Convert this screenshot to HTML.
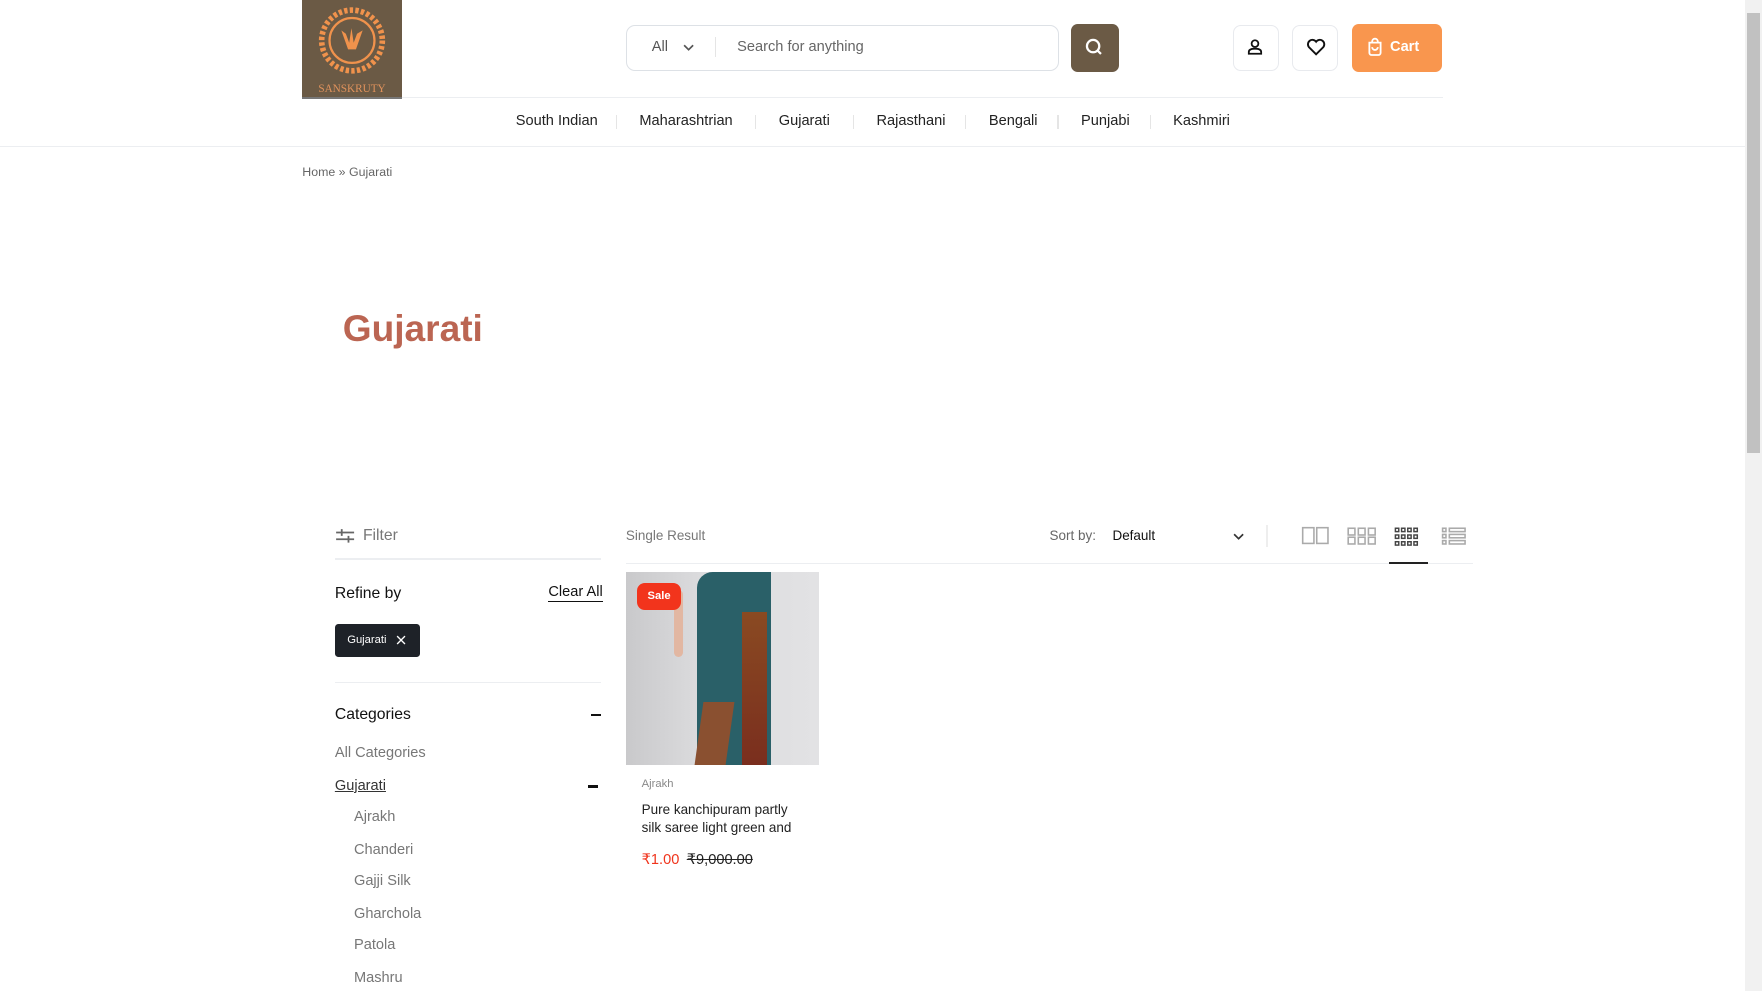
<!DOCTYPE html>
<html><head><meta charset="utf-8"><style>
html,body{margin:0;padding:0;background:#fff;overflow:hidden}
#w{zoom:1.12372;width:1568px;height:882px;position:relative;font-family:"Liberation Sans",sans-serif;color:#1c1c1c}
.a{position:absolute}
.sb{right:0;top:0;width:15px;height:882px;background:#f1f1f1}
.nav span{position:absolute;top:101px;font-size:13px;color:#222}
.sep{position:absolute;top:102px;width:1px;height:13px;background:#e5e5e5}
.cat{position:absolute;font-size:13px;color:#777}
.ib{position:absolute;top:22px;width:41px;height:41px;border:1.5px solid #e8eaee;border-radius:7px;box-sizing:border-box}
</style></head><body><div id="w">
<div class="a" style="left:269px;top:0;width:89px;height:86px;background:#6b5a45"></div>
<svg class="a" style="left:269px;top:0" width="89" height="86" viewBox="0 0 89 86">
<circle cx="44.5" cy="36" r="27" fill="none" stroke="#f0924c" stroke-width="5" stroke-dasharray="3 2"/>
<circle cx="44.5" cy="36" r="20" fill="none" stroke="#f0924c" stroke-width="2"/>
<path d="M35 27 L41 44 L48 44 L54 27 L49 30 L46 38 L44 25 L42 38 L39 30Z" fill="#f0924c"/>
<text x="44.5" y="82" font-family="Liberation Serif,serif" font-size="10" fill="#e0925c" text-anchor="middle">SANSKRUTY</text></svg>
<div class="a" style="left:269px;top:86px;width:89px;height:2px;background:#777"></div>
<div class="a" style="left:358px;top:86px;width:926px;height:1px;background:#eceef1"></div>
<div class="a" style="left:557px;top:22px;width:385px;height:41px;border:1.5px solid #dde1e6;border-radius:8px;box-sizing:border-box"></div>
<div class="a" style="left:580px;top:35px;font-size:13px;color:#555">All</div>
<svg class="a" style="left:608px;top:38px" width="10" height="8"><path d="M1 2l4 4 4-4" stroke="#555" stroke-width="1.5" fill="none"/></svg>
<div class="a" style="left:636px;top:33px;width:1px;height:18px;background:#e5e5e5"></div>
<div class="a" style="left:656px;top:35px;font-size:13px;color:#666">Search for anything</div>
<div class="a" style="left:953px;top:21px;width:43px;height:43px;background:#6b5a45;border-radius:6px"></div>
<svg class="a" style="left:964px;top:32px" width="20" height="20"><circle cx="9" cy="9" r="5.5" stroke="#fff" stroke-width="2" fill="none"/><path d="M13 13l3 3" stroke="#fff" stroke-width="2"/></svg>
<div class="ib" style="left:1097px"></div>
<svg class="a" style="left:1109px;top:34px" width="16" height="16"><circle cx="8" cy="5" r="3" stroke="#111" stroke-width="1.6" fill="none"/><path d="M2.5 14v-1.5c0-2 2-3 5.5-3s5.5 1 5.5 3V14z" stroke="#111" stroke-width="1.6" fill="none"/></svg>
<div class="ib" style="left:1150px"></div>
<svg class="a" style="left:1162px;top:34px" width="18" height="16"><path d="M9 14.5L2.5 8A3.7 3.7 0 0 1 9 3.3 3.7 3.7 0 0 1 15.5 8z" stroke="#111" stroke-width="1.7" fill="none"/></svg>
<div class="a" style="left:1203px;top:21px;width:80px;height:43px;background:#f9964e;border-radius:6px"></div>
<svg class="a" style="left:1216px;top:33px" width="16" height="18"><path d="M3 5h10v9a2 2 0 0 1-2 2H5a2 2 0 0 1-2-2z" stroke="#fff" stroke-width="1.6" fill="none"/><path d="M5.5 5V4a2.5 2.5 0 0 1 5 0v1M5.5 9a2.5 2.5 0 0 0 5 0" stroke="#fff" stroke-width="1.6" fill="none"/></svg>
<div class="a" style="left:1237px;top:35px;font-size:13px;color:#fff;font-weight:bold">Cart</div>
<div class="nav"><span style="left:459px">South Indian</span><span style="left:569px">Maharashtrian</span><span style="left:693px">Gujarati</span><span style="left:780px">Rajasthani</span><span style="left:880px">Bengali</span><span style="left:962px">Punjabi</span><span style="left:1044px">Kashmiri</span></div>
<div class="sep" style="left:548px"></div><div class="sep" style="left:672px"></div><div class="sep" style="left:759px"></div><div class="sep" style="left:859px"></div><div class="sep" style="left:941px"></div><div class="sep" style="left:1023px"></div>
<div class="a" style="left:0;top:130px;width:1553px;height:1px;background:#eceef1"></div>
<div class="a" style="left:269px;top:147px;font-size:11px;color:#666">Home » Gujarati</div>
<div class="a" style="left:305px;top:273px;font-size:33px;font-weight:bold;color:#bb6552">Gujarati</div>
<svg class="a" style="left:298px;top:470px" width="18" height="14"><path d="M1 4h16M1 10h16" stroke="#666" stroke-width="1.6"/><path d="M6 1v6M12 7v6" stroke="#666" stroke-width="1.6"/></svg>
<div class="a" style="left:323px;top:469px;font-size:14px;color:#777">Filter</div>
<div class="a" style="left:298px;top:497px;width:237px;height:1px;background:#eceef1"></div>
<div class="a" style="left:298px;top:521px;font-size:14px;color:#111">Refine by</div>
<div class="a" style="left:488px;top:520px;font-size:13px;color:#111;border-bottom:1px solid #111;padding-bottom:1px">Clear All</div>
<div class="a" style="left:298px;top:555px;width:76px;height:30px;background:#1e2228;border-radius:3px"></div>
<div class="a" style="left:309px;top:564px;font-size:10px;color:#fff">Gujarati</div>
<svg class="a" style="left:352px;top:565px" width="9" height="9"><path d="M1 1l7 7M8 1l-7 7" stroke="#fff" stroke-width="1.2"/></svg>
<div class="a" style="left:298px;top:607px;width:237px;height:1px;background:#eceef1"></div>
<div class="a" style="left:298px;top:628px;font-size:14px;color:#111">Categories</div>
<div class="a" style="left:526px;top:635px;width:9px;height:2px;background:#111"></div>
<div class="cat" style="left:298px;top:663px">All Categories</div>
<div class="cat" style="left:298px;top:692px;color:#333;text-decoration:underline">Gujarati</div>
<div class="a" style="left:523px;top:699px;width:9px;height:2px;background:#111"></div>
<div class="cat" style="left:315px;top:720px">Ajrakh</div>
<div class="cat" style="left:315px;top:749px">Chanderi</div>
<div class="cat" style="left:315px;top:777px">Gajji Silk</div>
<div class="cat" style="left:315px;top:806px">Gharchola</div>
<div class="cat" style="left:315px;top:834px">Patola</div>
<div class="cat" style="left:315px;top:863px">Mashru</div>
<div class="a" style="left:557px;top:470px;font-size:12px;color:#777">Single Result</div>
<div class="a" style="left:934px;top:470px;font-size:12px;color:#666">Sort by:</div>
<div class="a" style="left:990px;top:470px;font-size:12px;color:#111">Default</div>
<svg class="a" style="left:1097px;top:473px" width="10" height="8"><path d="M1 2l4 4 4-4" stroke="#333" stroke-width="1.5" fill="none"/></svg>
<div class="a" style="left:1127px;top:467px;width:1px;height:20px;background:#eee"></div>
<svg class="a" style="left:1158px;top:468px" width="150" height="18">
<g fill="none" stroke="#aaa" stroke-width="1.4"><rect x="1.5" y="1.5" width="10" height="14"/><rect x="14" y="1.5" width="10" height="14"/>
<rect x="42" y="2" width="6" height="6"/><rect x="51" y="2" width="6" height="6"/><rect x="60" y="2" width="6" height="6"/><rect x="42" y="10" width="6" height="6"/><rect x="51" y="10" width="6" height="6"/><rect x="60" y="10" width="6" height="6"/>
<rect x="126" y="2" width="3" height="3"/><rect x="126" y="7.5" width="3" height="3"/><rect x="126" y="13" width="3" height="3"/><rect x="132" y="2" width="14" height="3"/><rect x="132" y="7.5" width="14" height="3"/><rect x="132" y="13" width="14" height="3"/></g>
<g fill="none" stroke="#444" stroke-width="1.3"><rect x="84" y="2" width="3" height="3"/><rect x="89.5" y="2" width="3" height="3"/><rect x="95" y="2" width="3" height="3"/><rect x="100.5" y="2" width="3" height="3"/><rect x="84" y="8" width="3" height="3"/><rect x="89.5" y="8" width="3" height="3"/><rect x="95" y="8" width="3" height="3"/><rect x="100.5" y="8" width="3" height="3"/><rect x="84" y="14" width="3" height="3"/><rect x="89.5" y="14" width="3" height="3"/><rect x="95" y="14" width="3" height="3"/><rect x="100.5" y="14" width="3" height="3"/></g></svg>
<div class="a" style="left:557px;top:501px;width:754px;height:1px;background:#eceef1"></div>
<div class="a" style="left:1236px;top:500px;width:35px;height:2px;background:#222"></div>
<div class="a" style="left:557px;top:509px;width:172px;height:172px;background:linear-gradient(90deg,#c9c9cb,#dcdcde 40%,#e2e2e4)"></div>
<div class="a" style="left:620px;top:509px;width:66px;height:172px;background:#2a6068;border-radius:14px 0 0 0"></div>
<div class="a" style="left:660px;top:545px;width:23px;height:136px;background:linear-gradient(#8a4a22,#7a2e1e)"></div>
<div class="a" style="left:622px;top:625px;width:28px;height:56px;background:#8a5030;transform:skewX(-8deg)"></div>
<div class="a" style="left:600px;top:525px;width:8px;height:60px;background:#e2b7a2;border-radius:4px"></div>
<div class="a" style="left:567px;top:519px;width:39px;height:24px;background:#f2341c;border-radius:7px;color:#fff;font-size:10px;font-weight:bold;text-align:center;line-height:24px">Sale</div>
<div class="a" style="left:571px;top:692px;font-size:10px;color:#888">Ajrakh</div>
<div class="a" style="left:571px;top:713px;font-size:12px;line-height:16px;color:#222;width:150px">Pure kanchipuram partly silk saree light green and</div>
<div class="a" style="left:571px;top:757px;font-size:13px;color:#f0341c">₹1.00 <span style="color:#222;text-decoration:line-through;margin-left:3px">₹9,000.00</span></div>
<div class="a sb"></div>
<div class="a" style="right:2px;top:12px;width:11px;height:391px;background:#c1c1c1"></div>
</div></body></html>
